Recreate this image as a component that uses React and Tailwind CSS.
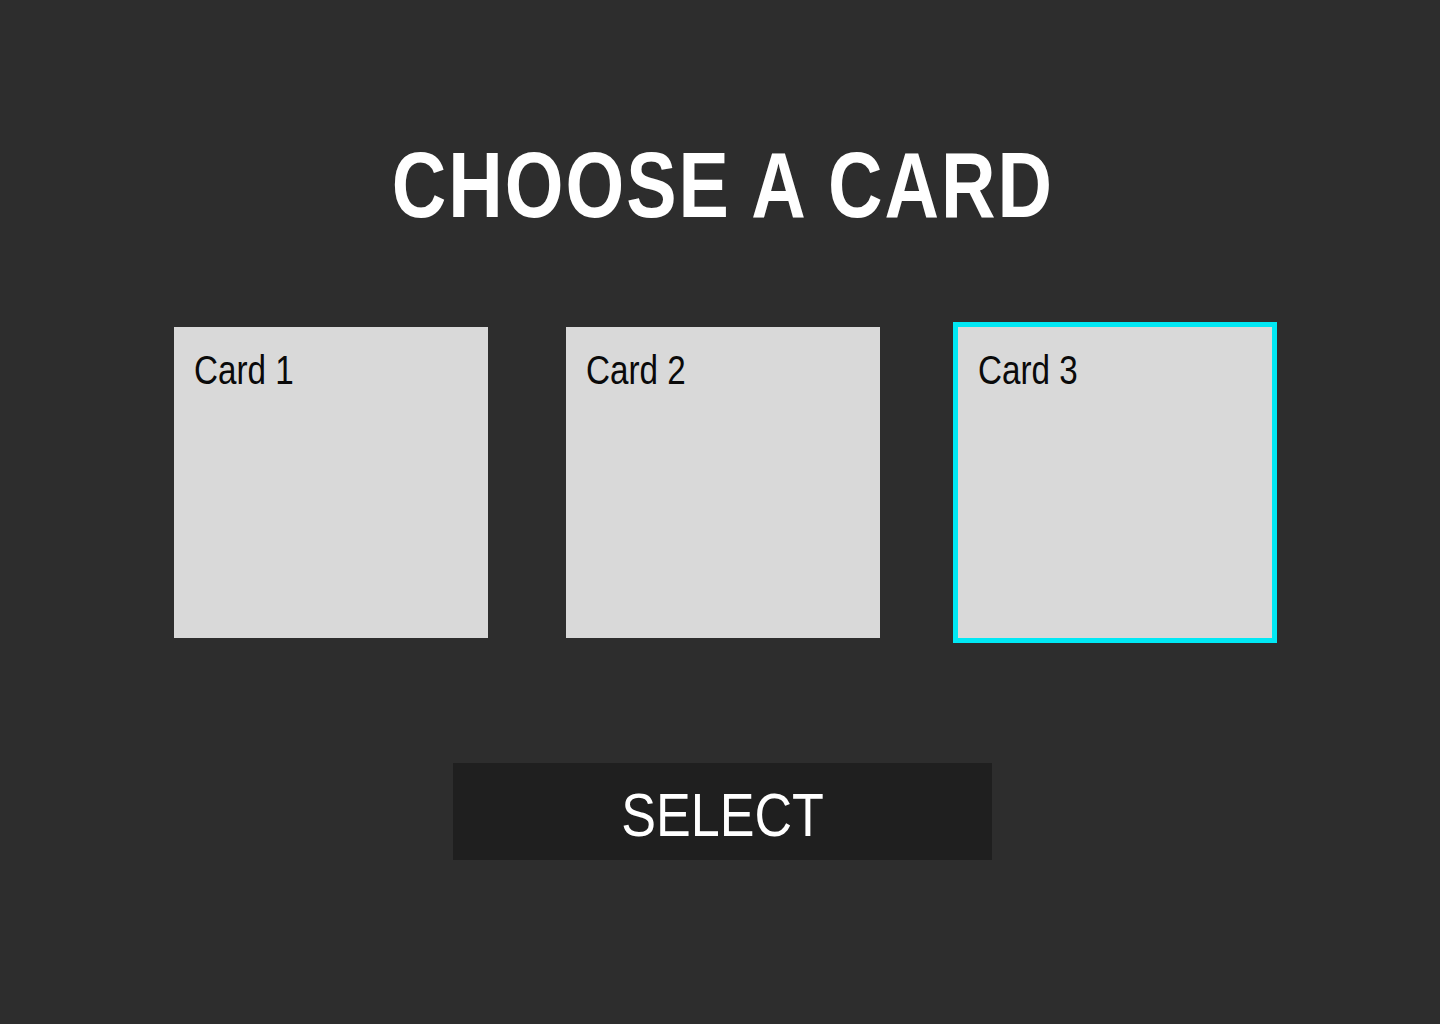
import React, { useState } from 'react';

const cards = ['Card 1', 'Card 2', 'Card 3'];

// no narrow face installed, so squeeze Liberation Sans to Arial Narrow width
const font = { fontFamily: '"Liberation Sans Narrow", "Liberation Sans", Arial, sans-serif' };

const App = () => {
    const [selected, setSelected] = useState(2);

    return (
        <div className="min-h-[1024px] w-full bg-[#2d2d2d] flex flex-col items-center pl-[5px]" style={font}>
            <h1 className="mt-[139px] text-[92px] leading-none font-bold text-white tracking-[2.5px] inline-block scale-x-[0.82] origin-center whitespace-nowrap">
                CHOOSE A CARD
            </h1>

            <div className="mt-[96px] flex gap-[78px] pl-[1px]">
                {cards.map((label, i) => (
                    <button
                        key={label}
                        type="button"
                        onClick={() => setSelected(i)}
                        className={`w-[314px] h-[311px] bg-[#d9d9d9] text-left flex items-start pt-[23px] pl-[20px] ${selected === i ? 'outline-[5px] outline-solid outline-[#00e8f4]' : ''
                            }`}
                    >
                        <span className="inline-block text-[40px] leading-none text-[#0a0a0a] scale-x-[0.83] origin-left whitespace-nowrap">{label}</span>
                    </button>
                ))}
            </div>

            <button
                type="button"
                className="mt-[125px] w-[539px] h-[97px] bg-[#1f1f1f] text-white flex items-center justify-center pt-[7px]"
            >
                <span className="inline-block text-[62px] leading-none scale-x-[0.84] origin-center">SELECT</span>
            </button>
        </div>
    );
};

export default App;
